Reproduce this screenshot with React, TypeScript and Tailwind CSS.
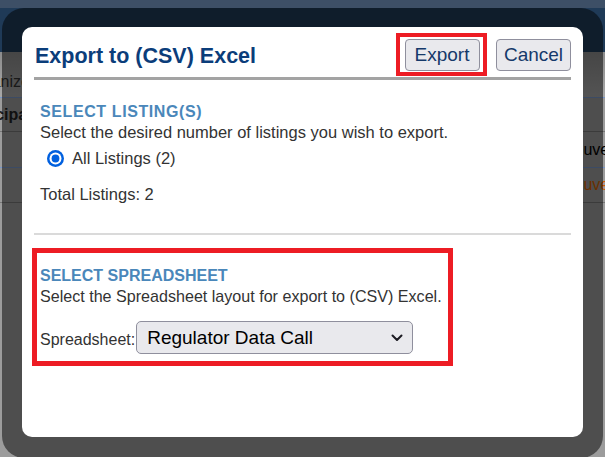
import React from "react";

const FONT = { fontFamily: '"Liberation Sans", Arial, sans-serif' };

function Radio() {
  return (
    <svg width="17" height="17" viewBox="0 0 17 17" className="shrink-0">
      <circle cx="8.5" cy="8.5" r="8.5" fill="#0060df" />
      <circle cx="8.5" cy="8.5" r="6" fill="#ffffff" />
      <circle cx="8.5" cy="8.5" r="3.9" fill="#0060df" />
    </svg>
  );
}

function Chevron() {
  return (
    <svg width="12" height="8" viewBox="0 0 12 8" fill="none">
      <path d="M1.5 1.5 L6 6 L10.5 1.5" stroke="#1c1b22" strokeWidth="2" strokeLinecap="round" strokeLinejoin="round" />
    </svg>
  );
}

function BackgroundPage() {
  return (
    <div className="flex h-full w-full flex-col bg-[#9c9c9c]" style={FONT}>
      {/* site header */}
      <div className="h-[8px] bg-[#3d4f66]" />
      <div className="h-[44px] bg-[#1f3a57]" />
      {/* listing table */}
      <div className="flex h-[45px] items-center bg-gradient-to-b from-[#8c8c8c] to-[#a8a8a8] text-[16px] text-[#333]">
        <span className="-ml-[35px] whitespace-nowrap pt-[14px]">Organized</span>
      </div>
      <div className="h-px bg-[#7896c8]" />
      <div className="flex h-[33px] items-center text-[16px] font-bold text-[#222]">
        <span className="-ml-[36px] whitespace-nowrap">Principal</span>
      </div>
      <div className="h-px bg-[#767676]" />
      <div className="flex h-[35px] items-center text-[16px] text-black">
        <span className="ml-[563px] whitespace-nowrap">Nouvelle</span>
      </div>
      <div className="h-px bg-[#7896c8]" />
      <div className="flex h-[34px] items-center text-[16px] text-[#d45f00]">
        <span className="ml-[563px] whitespace-nowrap">Nouvelle</span>
      </div>
      <div className="h-px bg-[#767676]" />
    </div>
  );
}

export default function App() {
  return (
    <div className="relative h-[457px] w-[605px] overflow-hidden">
      <BackgroundPage />

      {/* dimmed dialog frame */}
      <div className="absolute left-[2px] right-[2px] top-[8px] h-[450px] rounded-[22px] bg-black/50" />

      {/* export dialog */}
      <div
        className="absolute left-[22px] top-[27px] flex h-[410px] w-[561px] flex-col rounded-[10px] bg-white"
        style={FONT}
      >
        <div className="flex items-start justify-between pl-[13px] pr-[12px] pt-[6px]">
          <h1 className="mt-[12px] text-[21.5px] font-bold leading-[22px] text-[#0b3d7a]">
            Export to (CSV) Excel
          </h1>
          <div className="flex items-center gap-[9px]">
            <div className="flex h-[43px] w-[91px] items-center justify-center border-4 border-[#ed1c24]">
              <button className="ml-px h-[32px] w-[75px] rounded-[4px] border border-[#8f8f9d] bg-[#e9e9ed] text-[19px] leading-none text-[#15396a]">
                Export
              </button>
            </div>
            <button className="h-[32px] w-[75px] rounded-[4px] border border-[#8f8f9d] bg-[#e9e9ed] text-[19px] leading-none text-[#15396a]">
              Cancel
            </button>
          </div>
        </div>

        <div className="mx-[12px] mt-px h-[3px] bg-[#a3a3a3]" />

        <section className="pl-[18px] text-[16.5px] leading-[20px] text-[#333]">
          <h2 className="mt-[22px] text-[16px] font-bold tracking-[0.6px] text-[#4a87ba]">SELECT LISTING(S)</h2>
          <p>Select the desired number of listings you wish to export.</p>
          <label className="mt-[6px] flex items-center gap-[8px] pl-[7px]">
            <Radio />
            <span>All Listings (2)</span>
          </label>
          <p className="mt-[16px]">Total Listings: 2</p>
        </section>

        <div className="mx-[12px] mt-[29px] h-[2px] bg-[#dadada]" />

        <section className="ml-[10px] mt-[13px] w-[421px] border-[5px] border-[#ed1c24] pb-[7px] pl-[3px] pt-[13px] text-[16.5px] leading-[20px] text-[#333]">
          <h2 className="text-[16px] font-bold text-[#4a87ba]">SELECT SPREADSHEET</h2>
          <p className="whitespace-nowrap text-[16.1px]">Select the Spreadsheet layout for export to (CSV) Excel.</p>
          <div className="mt-[15px] flex items-center">
            <span className="pt-[4px] text-[16px]">Spreadsheet:</span>
            <div className="relative ml-px">
              <select
                defaultValue="regulator"
                className="h-[33px] w-[277px] appearance-none rounded-[5px] border border-[#8f8f9d] bg-[#e9e9ed] pl-[10px] text-[19px] text-black outline-none"
                style={FONT}
              >
                <option value="regulator">Regulator Data Call</option>
              </select>
              <span className="pointer-events-none absolute right-[10px] top-[13px]">
                <Chevron />
              </span>
            </div>
          </div>
        </section>
      </div>
    </div>
  );
}
